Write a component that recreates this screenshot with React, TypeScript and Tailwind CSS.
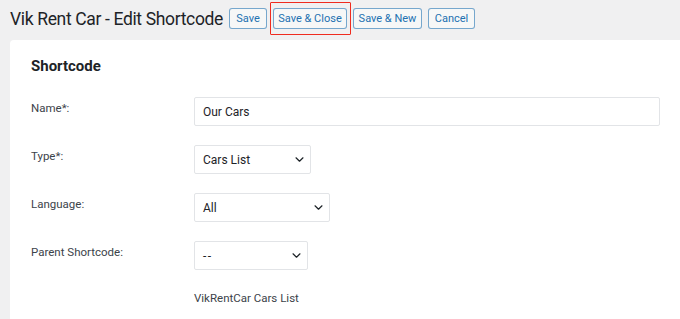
const btn =
  "h-[21px] shrink-0 rounded-[3px] border border-[#2271b1]/60 bg-[#f6f7f7] text-center text-[11px] leading-[19px] text-[#2271b1]";

function Chevron() {
  return (
    <svg width="9" height="5" viewBox="0 0 9 5" fill="none" className="shrink-0">
      <path d="M1 0.8l3.5 3.4 3.5-3.4" stroke="#1d2327" strokeWidth="1.2" strokeLinecap="round" strokeLinejoin="round" />
    </svg>
  );
}

function Select({ value, width, dashed }: { value: string; width: string; dashed?: boolean }) {
  return (
    <div
      className={`flex h-[29px] items-center justify-between rounded-[2px] border border-[#e2e4e7] bg-white pl-[8px] pr-[6px] text-[12px] text-[#1d2327] ${width}`}
    >
      <span className={dashed ? "tracking-[1.5px]" : ""}>{value}</span>
      <Chevron />
    </div>
  );
}

function Row({ label, children }: { label: string; children: React.ReactNode }) {
  return (
    <div className="flex items-start">
      <div className="w-[163px] pt-[3px] text-[11.5px] text-[#3c434a]">{label}</div>
      {children}
    </div>
  );
}

export default function App() {
  return (
    <div
      className="h-[319px] w-[680px] overflow-hidden bg-[#f0f0f1]"
      style={{ fontFamily: "Roboto, 'Noto Sans', sans-serif" }}
    >
      <div className="flex h-[40px] items-start pl-[10px] pt-[8px]">
        <h1 className="w-[219px] shrink-0 whitespace-nowrap text-[17.5px] leading-[22px] tracking-[-0.35px] text-[#1d2327]">
          Vik Rent Car - Edit Shortcode
        </h1>
        <div className="flex items-start gap-[6px]">
          <button className={`${btn} w-[38px]`}>Save</button>
          <div className="relative flex">
            <button className={`${btn} w-[74px]`}>Save &amp; Close</button>
            <div className="pointer-events-none absolute bottom-[-6px] left-[-3px] right-[-4px] top-[-6px] rounded-[1px] border border-solid border-[#ef2b1f]" />
          </div>
          <button className={`${btn} w-[69px]`}>Save &amp; New</button>
          <button className={`${btn} w-[47px]`}>Cancel</button>
        </div>
      </div>
      <div className="ml-[10px] h-[279px] rounded-tl-[4px] bg-white pl-[21px] pr-[20px] pt-[16px]">
        <h2 className="text-[15px] font-bold leading-[20px] text-[#1d2327]">Shortcode</h2>
        <div className="mt-[21px] flex flex-col gap-[19px]">
          <Row label="Name*:">
            <div className="flex h-[29px] w-[466px] items-center rounded-[2px] border border-[#e2e4e7] bg-white px-[8px] text-[12px] text-[#1d2327]">
              Our Cars
            </div>
          </Row>
          <Row label="Type*:">
            <Select value="Cars List" width="w-[117px]" />
          </Row>
          <Row label="Language:">
            <Select value="All" width="w-[136px]" />
          </Row>
          <Row label="Parent Shortcode:">
            <Select value="--" width="w-[114px]" dashed />
          </Row>
          <div className="pl-[163px] pt-[1px] text-[11.5px] text-[#3c434a]">VikRentCar Cars List</div>
        </div>
      </div>
    </div>
  );
}
